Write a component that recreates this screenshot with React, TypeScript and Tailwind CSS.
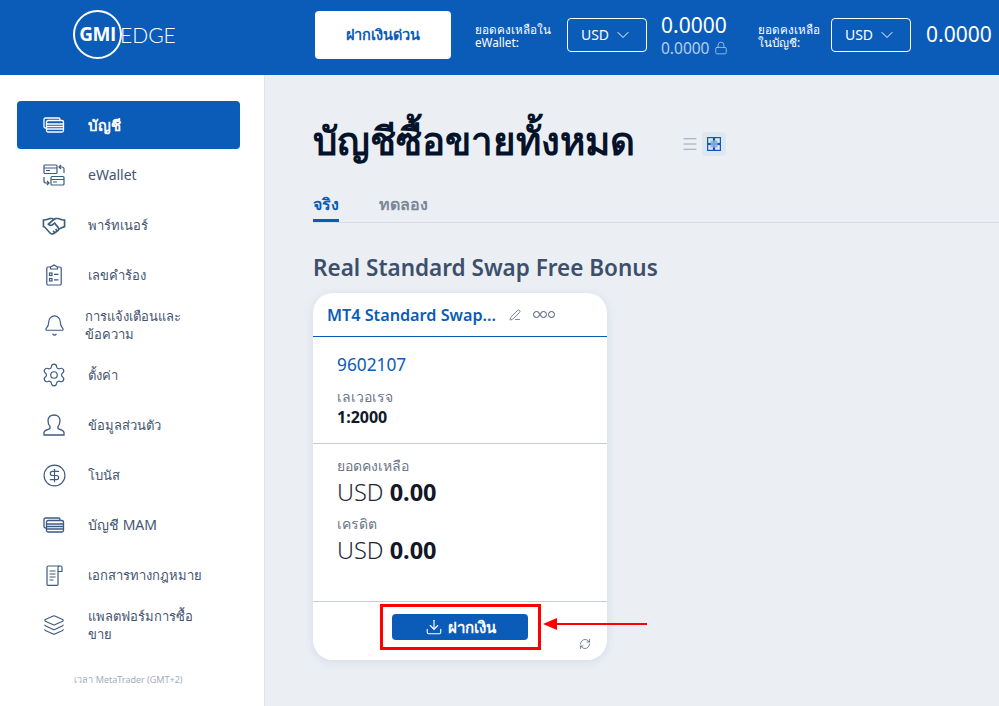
import React from "react";
import { ChevronDown, Lock, PenLine, RefreshCw, Download, Bell, Settings, CircleDollarSign, Layers, Menu } from "lucide-react";
import { LiaHandshake } from "react-icons/lia";

const CardsIcon = () => (
  <svg width="22" height="16" viewBox="0 0 22 16" fill="none" stroke="currentColor" strokeWidth="1.3">
    <path d="M3 11H2.5A1.5 1.5 0 0 1 1 9.500V2.500A1.500 1.500 0 0 1 2.500 1h13A1.500 1.500 0 0 1 17 2.500V3.500" />
    <rect x="3.500" y="3.500" width="17" height="11.500" rx="1.500" />
    <path d="M3.500 7h17M3.500 9.500h17M3.500 12h17" />
  </svg>
);

const WalletIcon = () => (
  <svg width="22" height="22" viewBox="0 0 22 22" fill="none" stroke="currentColor" strokeWidth="1.2">
    <rect x="1" y="1" width="13" height="8.500" rx="1" />
    <path d="M1 4h13M3 6.500h4" />
    <rect x="8" y="12.500" width="13" height="8.500" rx="1" />
    <path d="M8 15.500h13M10 18h4" />
    <path d="M21 9V5a2 2 0 0 0-2-2h-2.500M18 1l-2 2 2 2" />
    <path d="M1 13v4a2 2 0 0 0 2 2h2.500M4 17l2 2-2 2" />
  </svg>
);

const ClipboardIcon = () => (
  <svg width="16" height="22" viewBox="0 0 16 22" fill="none" stroke="currentColor" strokeWidth="1.2">
    <path d="M4.500 3H2a1.200 1.200 0 0 0-1.200 1.200v15.600A1.200 1.200 0 0 0 2 21h12a1.200 1.200 0 0 0 1.200-1.200V4.200A1.200 1.200 0 0 0 14 3h-2.500" />
    <path d="M4.500 5V3L8 1l3.500 2v2z" />
    <rect x="3.500" y="9" width="2.500" height="2.500" />
    <rect x="3.500" y="14.500" width="2.500" height="2.500" />
    <path d="M8 10.300h4.500M8 15.800h4.500" />
  </svg>
);

const UserIcon = () => (
  <svg width="22" height="22" viewBox="0 0 22 22" fill="none" stroke="currentColor" strokeWidth="1.3">
    <path d="M7 12.500c-1.300-1.500-2-3.500-2-6C5 3.200 7.500 1 11 1s6 2.200 6 5.500c0 2.500-.7 4.500-2 6v2.200c2 1 6 1.600 6 3.800v2.500H1v-2.500c0-2.200 4-2.800 6-3.800z" />
  </svg>
);

const DocIcon = () => (
  <svg width="17" height="21" viewBox="0 0 17 21" fill="none" stroke="currentColor" strokeWidth="1.2">
    <path d="M12 6.500V19.500a.800.800 0 0 1-.8.800H1.800a.800.800 0 0 1-.8-.8V2.500A1.500 1.500 0 0 1 2.500 1h12A1.500 1.500 0 0 1 16 2.500v4z" />
    <path d="M12 6.500V2.500A1.500 1.500 0 0 1 13.500 1M3.500 6h6M3.500 9h6M3.500 12h6M3.500 15h4" />
  </svg>
);

const GridIcon = () => (
  <svg width="14" height="14" viewBox="0 0 14 14" fill="none" stroke="#0b5cb8" strokeWidth="1.2">
    <rect x="0.600" y="0.600" width="5.900" height="5.900" />
    <rect x="7.500" y="0.600" width="5.900" height="5.900" />
    <rect x="0.600" y="7.500" width="5.900" height="5.900" />
    <rect x="7.500" y="7.500" width="5.900" height="5.900" />
    <rect x="3.500" y="3.500" width="7" height="7" fill="#8fb0da" fillOpacity="0.85" stroke="none" />
  </svg>
);

const navItems = [
  { label: "บัญชี", icon: <CardsIcon />, active: true },
  { label: "eWallet", icon: <WalletIcon />, latin: true },
  { label: "พาร์ทเนอร์", icon: <LiaHandshake size={26} /> },
  { label: "เลขคำร้อง", icon: <ClipboardIcon /> },
  { label: "การแจ้งเตือนและข้อความ", icon: <Bell size={23} strokeWidth={1.2} />, shift: true },
  { label: "ตั้งค่า", icon: <Settings size={26} strokeWidth={1.1} /> },
  { label: "ข้อมูลส่วนตัว", icon: <UserIcon /> },
  { label: "โบนัส", icon: <CircleDollarSign size={25} strokeWidth={1.1} /> },
  { label: "บัญชี MAM", icon: <CardsIcon />, latin: true },
  { label: "เอกสารทางกฎหมาย", icon: <DocIcon /> },
  { label: "แพลตฟอร์มการซื้อขาย", icon: <Layers size={22} strokeWidth={1.2} /> },
];

const CurrencySelect = () => (
  <div className="flex h-[34px] w-[80px] shrink-0 items-center justify-center gap-1 rounded border border-white text-sm">
    USD
    <ChevronDown size={20} strokeWidth={1.2} />
  </div>
);

export default function App() {
  return (
    <div className="h-[706px] w-[999px] overflow-hidden bg-[#ebeff4] font-['Noto_Sans','Open_Sans',sans-serif]">
      <header className="flex h-[75px] items-center bg-[#0b5cb8] pb-[6px] text-white">
        <div className="flex w-[315px] shrink-0 items-center pl-[73px]">
          <div className="flex h-[49px] w-[49px] items-center justify-center rounded-full border-2 border-white">
            <span className="font-['Open_Sans'] text-[19px] font-bold tracking-[-0.5px]">GMI</span>
          </div>
          <span className="-ml-[2px] font-['Lato'] text-[21px] font-light">EDGE</span>
        </div>
        <button className="h-12 w-[136px] shrink-0 rounded bg-white text-[14.5px] font-semibold text-[#0b5cb8]">ฝากเงินด่วน</button>
        <div className="ml-6 mt-[2px] w-[92px] shrink-0 text-[11.7px] leading-[13px]">ยอดคงเหลือใน eWallet:</div>
        <CurrencySelect />
        <div className="ml-[14px] flex w-[97px] shrink-0 flex-col items-start">
          <span className="text-[21px] leading-[26px]">0.0000</span>
          <span className="flex items-center gap-[5px] text-[15.5px] leading-5 text-[#b4cfee]">
            0.0000 <Lock size={14} strokeWidth={1.3} />
          </span>
        </div>
        <div className="mt-[2px] w-[73px] shrink-0 text-[11.7px] leading-[13px]">ยอดคงเหลือในบัญชี:</div>
        <CurrencySelect />
        <span className="ml-[15px] whitespace-nowrap text-[21px]">0.0000</span>
      </header>

      <div className="flex h-[631px]">
        <aside className="flex w-[265px] shrink-0 flex-col border-r border-[#dfe3e8] bg-white pl-[17px] pr-6 pt-[26px]">
          <nav className="flex flex-col gap-[2px]">
            {navItems.map((item) => (
              <div
                key={item.label}
                className={`flex h-12 items-center rounded-sm ${item.active ? "bg-[#0b5cb8] text-[15px] font-bold text-white" : "text-[#44546f]"} ${item.latin ? "text-sm" : ""} ${!item.active && !item.latin ? "text-[13px]" : ""}`}
              >
                <span className="flex w-[71px] shrink-0 justify-center pl-[3px] text-[#3d5a80]">
                  <span className={item.active ? "text-white" : ""}>{item.icon}</span>
                </span>
                <span className={`w-[120px] leading-[18px] ${item.shift ? "-ml-[3px]" : ""}`}>{item.label}</span>
              </div>
            ))}
          </nav>
          <div className="mt-6 text-center text-[9px] text-[#a3adba]">เวลา MetaTrader (GMT+2)</div>
        </aside>

        <main className="relative min-w-0 flex-1 pl-[48px] pt-[43px]">
          <div className="flex items-center gap-[46px]">
            <h1 className="whitespace-nowrap text-[38.5px] font-bold leading-[44px] text-[#04132a]">บัญชีซื้อขายทั้งหมด</h1>
            <div className="mt-2 flex items-center gap-[3px]">
              <span className="text-[#7b8ba0]"><Menu size={18} strokeWidth={1} /></span>
              <span className="flex h-6 w-6 items-center justify-center rounded bg-[#dde6f2]"><GridIcon /></span>
            </div>
          </div>

          <div className="mt-[30px] flex gap-10 border-b border-[#d8dce4] text-base font-semibold">
            <span className="border-b-[3px] border-[#0b5cb8] pb-[3px] text-[#0b5cb8]">จริง</span>
            <span className="text-[#7c8798]">ทดลอง</span>
          </div>

          <h2 className="mt-[29px] text-[22.5px] font-semibold leading-[32px] text-[#3d4f6b]">Real Standard Swap Free Bonus</h2>

          <div className="mt-[9px] flex h-[367px] w-[294px] flex-col rounded-[20px] bg-white shadow-[0_2px_10px_rgba(60,90,140,0.12)]">
            <div className="flex h-[44px] shrink-0 items-center border-b border-[#0b5cb8] pl-[14px]">
              <span className="mt-[2px] text-[16.2px] font-semibold text-[#0b5cb8]">MT4 Standard Swap...</span>
              <PenLine size={12} strokeWidth={1.4} className="ml-[13px] text-[#44546f]" />
              <span className="ml-[12px] flex gap-[0.5px]">
                <i className="h-[7px] w-[7px] rounded-full border border-[#44546f]" />
                <i className="h-[7px] w-[7px] rounded-full border border-[#44546f]" />
                <i className="h-[7px] w-[7px] rounded-full border border-[#44546f]" />
              </span>
            </div>
            <div className="h-[107px] shrink-0 border-b border-[#c6ccd6] pl-6 pt-[14px]">
              <div className="text-[17.3px] leading-7 text-[#0b5cb8]">9602107</div>
              <div className="mt-2 text-sm leading-5 text-[#6b7789]">เลเวอเรจ</div>
              <div className="text-base font-bold leading-5 text-[#111827]">1:2000</div>
            </div>
            <div className="h-[158px] shrink-0 border-b border-[#c6ccd6] pl-6 pt-3">
              <div className="text-sm leading-5 text-[#6b7789]">ยอดคงเหลือ</div>
              <div className="text-[23.5px] font-light leading-8 text-[#1f2937]">USD <b className="font-bold text-[#111827]">0.00</b></div>
              <div className="mt-[6px] text-sm leading-5 text-[#6b7789]">เครดิต</div>
              <div className="text-[23.5px] font-light leading-8 text-[#1f2937]">USD <b className="font-bold text-[#111827]">0.00</b></div>
            </div>
            <div className="relative flex flex-1 justify-center pt-3">
              <button className="flex h-[26px] w-[136px] items-center justify-center gap-[5px] rounded bg-[#0b5cb8] text-[15px] font-semibold text-white">
                <Download size={18} strokeWidth={1.5} /> ฝากเงิน
              </button>
              <RefreshCw size={12} strokeWidth={1.4} className="absolute bottom-[10px] right-[16px] text-[#44546f]" />
            </div>
          </div>

          {/* annotation over the card */}
          <div className="absolute left-[115px] top-[529px] h-[46px] w-[161px] border-[3px] border-[#ff0000]" />
          <div className="absolute left-[278px] top-[543px] flex items-center">
            <span className="h-0 w-0 border-y-[6px] border-r-[14px] border-y-transparent border-r-[#ff0000]" />
            <span className="h-[2px] w-[90px] bg-[#ff0000]" />
          </div>
        </main>
      </div>
    </div>
  );
}
